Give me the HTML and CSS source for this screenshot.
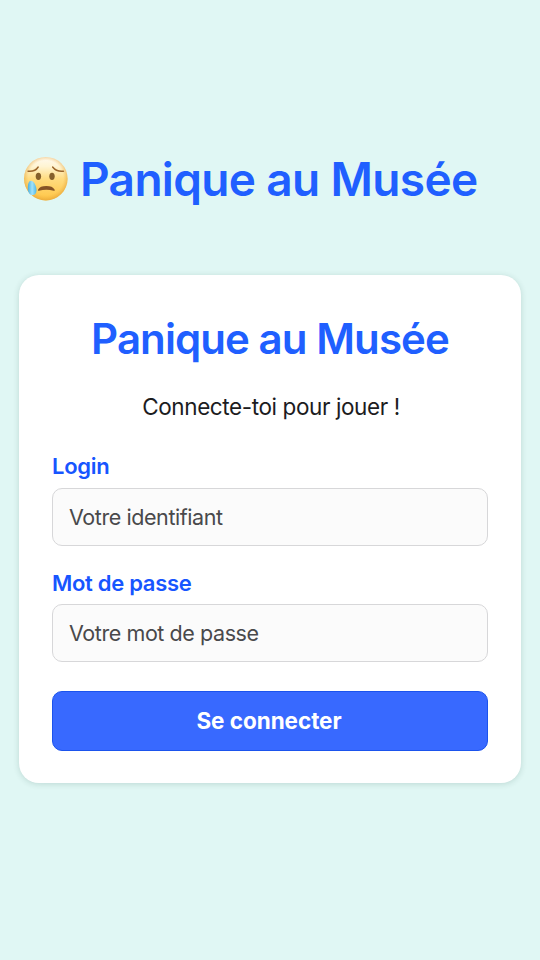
FILE: index.html
```html
<!DOCTYPE html>
<html lang="fr">
<head>
<meta charset="utf-8">
<title>Panique au Musée</title>
<link rel="stylesheet" href="styles.css">
</head>
<body>
<header class="header">
<svg class="emoji" viewBox="0 0 46 46" aria-hidden="true">
<defs>
<radialGradient id="shade" cx="50%" cy="48%" r="53%"><stop offset=".75" stop-color="#eeb044" stop-opacity="0"/><stop offset="1" stop-color="#dd9934" stop-opacity=".65"/></radialGradient>
<linearGradient id="face" x1="0" y1="0" x2="0" y2="1"><stop offset="0" stop-color="#fffaf0"/><stop offset=".22" stop-color="#fff4d2"/><stop offset=".5" stop-color="#ffdc80"/><stop offset="1" stop-color="#ffc544"/></linearGradient>
<linearGradient id="drop" x1="0" y1="0" x2="1" y2="0"><stop offset="0" stop-color="#48aee0"/><stop offset=".5" stop-color="#a1e2fb"/><stop offset="1" stop-color="#50b8e5"/></linearGradient>
</defs>
<circle cx="22.8" cy="22.7" r="21.8" fill="url(#face)"/>
<circle cx="22.8" cy="22.7" r="21.8" fill="url(#shade)"/>
<path d="M5 15.2Q12 16 15.2 11M29.6 11Q33.5 16 40.5 15.2" fill="none" stroke="#9a6429" stroke-width="1.4" stroke-linecap="round"/>
<ellipse cx="15.4" cy="20.3" rx="2.7" ry="3.6" fill="#85602b"/><ellipse cx="29" cy="20.3" rx="2.7" ry="3.6" fill="#85602b"/>
<path d="M15 33.8C16.5 31 19 30 23.3 30S30 31 31.7 33.8Q32.2 35.2 30.7 34.7Q23.3 32.8 16 34.7Q14.5 35.2 15 33.8Z" fill="#855325"/>
<path d="M8.2 24.7C10.8 25 13.5 30 13.5 34.3C13.5 37.5 12 39 9.7 39C6.4 39 4.8 36.3 4.8 32C4.8 28 5.8 24.5 8.2 24.7Z" fill="url(#drop)"/>
</svg>
<h1 class="title">Panique au Musée</h1>
</header>
<main class="card">
<h2 class="card-title">Panique au Musée</h2>
<p class="intro">Connecte-toi pour jouer !</p>
<form>
<label class="label" for="login">Login</label>
<input class="input" id="login" type="text" placeholder="Votre identifiant">
<label class="label" for="password">Mot de passe</label>
<input class="input" id="password" type="password" placeholder="Votre mot de passe">
<button class="button" type="button">Se connecter</button>
</form>
</main>
</body>
</html>
```
FILE: styles.css
```css
* { box-sizing: border-box; }
body { margin: 0; height: 960px; padding: 149px 19px 0; background: #e0f7f4; font-family: Inter, sans-serif; color: #1c1c1e; overflow: hidden; }
.header { display: flex; align-items: center; height: 60px; padding-left: 4px; margin-bottom: 66px; }
.emoji { width: 46px; height: 46px; margin-right: 11px; flex: none; }
.title, .card-title { margin: 0; color: #205fff; font-weight: 600; white-space: nowrap; }
.title { font-size: 46px; line-height: 60px; letter-spacing: -0.65px; }
.card { width: 502px; height: 508px; padding: 34px 33px; border-radius: 20px; background: #fff; box-shadow: 0 1px 6px rgba(0, 60, 50, .16); }
.card-title { font-size: 42px; line-height: 60px; text-align: center; letter-spacing: -0.92px; }
.intro { margin: 23px 0 0; padding-left: 2px; font-size: 22.5px; line-height: 30px; text-align: center; letter-spacing: -0.4px; }
.label { display: block; margin-top: 29px; height: 30px; font-size: 22px; line-height: 30px; font-weight: 600; color: #1755ff; letter-spacing: -0.3px; }
.input { display: block; width: 100%; height: 58px; margin-top: 7px; padding: 0 16px; border: 1px solid #d7d7d9; border-radius: 10px; background: #fbfbfb; font: 21.5px Inter, sans-serif; letter-spacing: -0.42px; outline: 0; }
.input::placeholder { color: #49494b; opacity: 1; }
.input + .label { margin-top: 22px; height: 29px; }
.button { display: block; width: 100%; height: 60px; margin-top: 29px; padding: 0 2px 2px 0; border: 1px solid #1b53ed; border-radius: 10px; background: #3869ff; color: #fff; font: 700 22.5px Inter, sans-serif; letter-spacing: -0.05px; }
```
